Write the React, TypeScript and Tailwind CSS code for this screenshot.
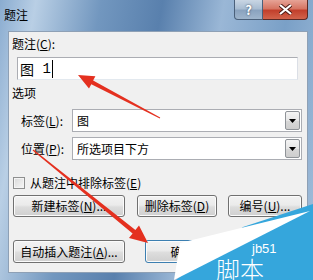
import React from "react";

const K = ({ c }: { c: string }) => <span className="underline underline-offset-1">{c}</span>;

function Btn({ w, primary, children }: { w: string; primary?: boolean; children: React.ReactNode }) {
  return (
    <div
      className={`${w} h-full rounded-[3px] border ${
        primary ? "border-[#3c7fb1]" : "border-[#707070]"
      } bg-[linear-gradient(#f2f2f2,#ebebeb_45%,#dddddd_55%,#cfcfcf)] shadow-[inset_0_0_0_1px_#fbfbfb] flex items-center justify-center text-[12px] leading-none text-black`}
    >
      {children}
    </div>
  );
}

function Combo({ value }: { value: string }) {
  return (
    <div className="w-[230px] h-full border border-[#abadb3] bg-white flex items-stretch p-px">
      <span className="flex-1 flex items-center pl-[3px] text-[12px] leading-none">{value}</span>
      <div className="w-[15px] border border-[#8f9398] rounded-[2px] bg-[linear-gradient(#f4f4f4,#e6e6e6_50%,#d8d8d8_50%,#cdcdcd)] flex items-center justify-center">
        <svg width="7" height="4" viewBox="0 0 7 4">
          <path d="M0 0H7L3.5 4Z" fill="#000" />
        </svg>
      </div>
    </div>
  );
}

export default function App() {
  return (
    <div className="relative w-[313px] h-[280px] overflow-hidden bg-[linear-gradient(100deg,#8aacd0_0%,#b9cfe5_10%,#7297bf_28%,#5980ad_45%,#9ab7d6_62%,#7aa0c7_80%,#a4bfdb_100%)] font-['Microsoft_YaHei','Noto_Sans_CJK_SC',sans-serif] text-black">
      {/* title bar */}
      <div className="h-[31px] flex items-start justify-between">
        <div className="ml-[4px] mt-[7px] text-[12px] leading-[16px]">题注</div>
        <div className="mr-[5px] flex h-[20px]">
          <div className="w-[29px] h-full rounded-bl-[4px] border border-t-0 border-[#4a607a] bg-[linear-gradient(#c9d6e4,#a9bdd2_45%,#8aa3bf_55%,#9fb5cc)] flex items-center justify-center">
            <span className="text-white font-bold text-[13px] leading-none [text-shadow:0_0_2px_#24364c]">?</span>
          </div>
          <div className="w-[45px] h-full rounded-br-[4px] border border-t-0 border-l-0 border-[#5a2a26] bg-[linear-gradient(#e6a396,#d67563_45%,#c2402c_55%,#d2634b)] flex items-center justify-center">
            <svg width="13" height="11" viewBox="0 0 13 11">
              <path d="M1 1L12 10M12 1L1 10" stroke="#4a1a14" strokeWidth="4" />
              <path d="M1 1L12 10M12 1L1 10" stroke="#fff" strokeWidth="2.2" />
            </svg>
          </div>
        </div>
      </div>

      {/* dialog panel */}
      <div className="ml-[8px] w-[300px] h-[242px] bg-[#f0f0f0] border border-[#8ea0b5] flex flex-col text-[12px] leading-[16px]">
        <div className="mt-[4px] ml-[3px] h-[16px]">
          题注(<K c="C" />):
        </div>
        <div className="mt-[5px] ml-[8px] w-[281px] h-[23px] bg-white border border-[#abadb3] border-b-[#e3e9ef] border-r-[#dbdfe6] flex items-center pl-[2px]">
          <span className="text-[14px] leading-none">图</span>
          <span className="font-['Liberation_Mono',monospace] text-[14px] leading-none whitespace-pre"> 1</span>
          <span className="ml-px w-px h-[18px] bg-black" />
        </div>
        <div className="mt-[5px] ml-[3px] h-[16px]">选项</div>
        <div className="mt-[8px] h-[23px] flex items-center">
          <span className="ml-[12px] w-[51px]">
            标签(<K c="L" />):
          </span>
          <Combo value="图" />
        </div>
        <div className="mt-[5px] h-[23px] flex items-center">
          <span className="ml-[12px] w-[51px]">
            位置(<K c="P" />):
          </span>
          <Combo value="所选项目下方" />
        </div>
        <div className="mt-[16px] ml-[4px] h-[13px] flex items-center gap-[5px]">
          <div className="w-[12px] h-[12px] border border-[#8e8f8f] bg-[linear-gradient(135deg,#d8d8d8,#f7f7f7)] shadow-[inset_0_0_0_1px_#f4f4f4]" />
          <span>
            从题注中排除标签(<K c="E" />)
          </span>
        </div>
        <div className="mt-[6px] ml-[4px] h-[22px] flex">
          <Btn w="w-[112px]">
            新建标签(<K c="N" />)...
          </Btn>
          <div className="w-[12px]" />
          <Btn w="w-[80px]">
            删除标签(<K c="D" />)
          </Btn>
          <div className="w-[11px]" />
          <Btn w="w-[74px]">
            编号(<K c="U" />)...
          </Btn>
        </div>
        <div className="mt-[23px] ml-[4px] h-[23px] flex">
          <Btn w="w-[112px]">
            自动插入题注(<K c="A" />)...
          </Btn>
          <div className="w-[20px]" />
          <Btn w="w-[75px]" primary>
            确定
          </Btn>
          <div className="w-[8px]" />
          <Btn w="w-[74px]">取消</Btn>
        </div>
      </div>

      {/* annotation arrows and watermark */}
      <svg className="absolute inset-0 pointer-events-none" width="313" height="280" viewBox="0 0 313 280">
        <polygon points="160.2,117.6 159.8,118.4 91.3,84.2 89,88.6 78,75 95.4,76.2 93.1,80.6" fill="#e4301f" />
        <polygon points="32.6,150.5 33.4,149.5 135.4,229.9 139,225.5 148,243 129,237.9 132.6,233.5" fill="#e4301f" />
        <polygon points="243,227 313,204 313,280 176,280" fill="#35a6dc" />
        <polygon points="180,243 310,211 174,280" fill="#ffffff" />
      </svg>
      <div className="absolute left-[252px] top-[242px] text-[13px] leading-none text-white font-['Liberation_Sans',sans-serif] pointer-events-none">
        jb51
      </div>
      <div className="absolute left-[216px] top-[257px] text-[24px] leading-none text-white font-['Noto_Sans_CJK_SC',sans-serif] font-light pointer-events-none">
        脚本
      </div>
    </div>
  );
}
